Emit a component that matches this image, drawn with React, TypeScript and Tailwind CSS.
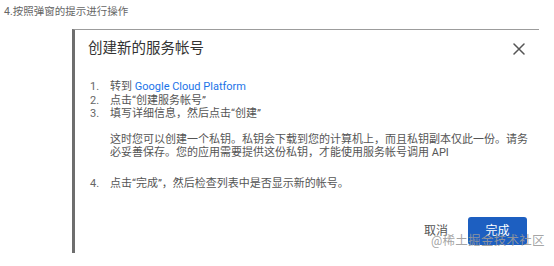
import React from 'react'

const font = { fontFamily: "Roboto, 'Noto Sans CJK SC', sans-serif" }

export default function App() {
  return (
    <main
      className="relative w-[554px] h-[266px] overflow-hidden bg-white text-[#444] font-['Roboto','Noto_Sans_CJK_SC',sans-serif]"
    >
      {/* 页面说明 */}
      <p className="pl-[4px] pt-[5px] h-[29px] text-[10.5px] leading-[14px] text-[#666]">
        4.按照弹窗的提示进行操作
      </p>

      {/* 弹窗截图 */}
      <section className="ml-[72px] w-[467px] h-[224px] border-l-[3px] border-t border-l-[#6e6e6e] border-t-[#9c9c9c] bg-white flex flex-col">
        <header className="flex items-center justify-between pl-[13px] pr-[14px] h-[38px]">
          <h2 className="text-[14.5px] leading-[20px] text-[#333]">创建新的服务帐号</h2>
          <svg width="12" height="12" viewBox="0 0 12 12" className="text-[#555]">
            <path d="M1 1 L11 11 M11 1 L1 11" stroke="currentColor" strokeWidth="1.5" strokeLinecap="round" />
          </svg>
        </header>

        <div className="pl-[15px] pr-[4px] pt-[12px] text-[11px] leading-[13.5px] text-[#555]">
          <ol className="flex flex-col">
            <li className="flex">
              <span className="w-[20px] text-[#666]">1.</span>
              <span>
                转到 <span className="text-[#1a73e8]">Google Cloud Platform</span>
              </span>
            </li>
            <li className="flex">
              <span className="w-[20px] text-[#666]">2.</span>
              <span>点击“创建服务帐号”</span>
            </li>
            <li className="flex">
              <span className="w-[20px] text-[#666]">3.</span>
              <span>填写详细信息，然后点击“创建”</span>
            </li>
          </ol>
          <p className="pl-[20px] pt-[12px]">
            这时您可以创建一个私钥。私钥会下载到您的计算机上，而且私钥副本仅此一份。请务必妥善保存。您的应用需要提供这份私钥，才能使用服务帐号调用 API
          </p>
          <div className="flex pt-[17px]">
            <span className="w-[20px] text-[#666]">4.</span>
            <span>点击“完成”，然后检查列表中是否显示新的帐号。</span>
          </div>
        </div>

        <footer className="mt-auto flex items-center justify-end gap-[20px] pr-[12px] pb-[8px]">
          <button className="text-[12px] text-[#555]">取消</button>
          <button className="w-[59px] h-[28px] rounded-[3px] bg-[#1d5fc1] text-[12px] text-white">完成</button>
        </footer>
      </section>

      {/* 水印 */}
      <span
        className="absolute left-[431px] top-[233px] text-[12.5px] leading-[16px] text-[#9a9a9a]/90 tracking-[0.3px]"
        style={font}
      >
        @稀土掘金技术社区
      </span>
    </main>
  )
}
